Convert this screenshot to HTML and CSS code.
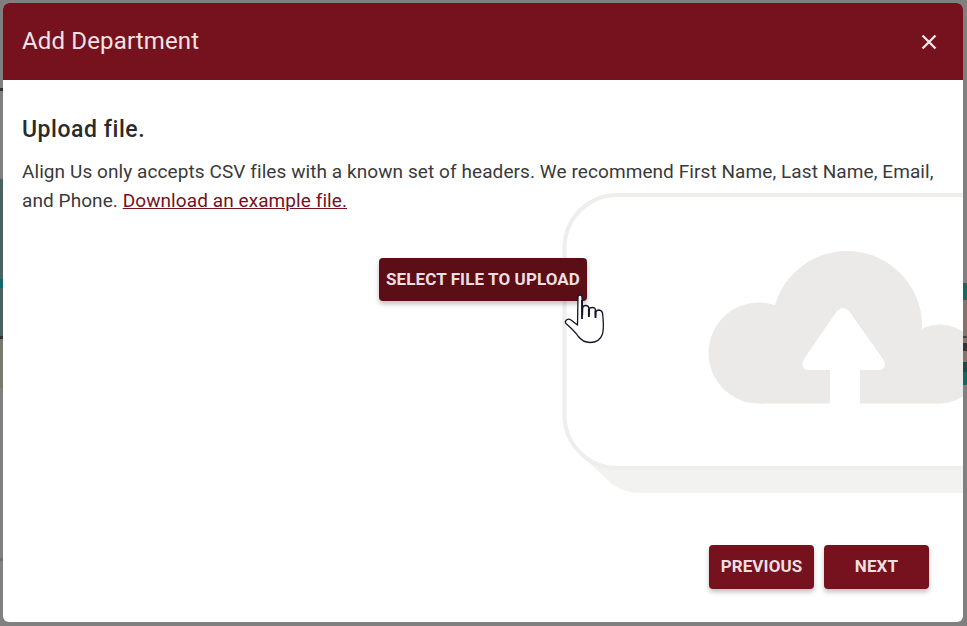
FILE: index.html
```html
<!DOCTYPE html>
<html lang="en">
<head>
    <meta charset="UTF-8">
    <meta name="viewport" content="width=device-width, initial-scale=1.0">
    <title>Add Department</title>
    <link rel="stylesheet" href="styles.css">
</head>
<body>
    <div class="modal">
        <div class="modal-header">
            <h2>Add Department</h2>
            <button class="close-btn" aria-label="Close">
                <svg width="16" height="16" viewBox="0 0 16 16"><path d="M1.500 1.500 L14.500 14.500 M14.500 1.500 L1.500 14.500" stroke="#f1e3e5" stroke-width="2.400" fill="none"/></svg>
            </button>
        </div>
        <div class="modal-body">
            <!-- faded upload picture behind the content -->
            <svg class="upload-art" width="404" height="300" viewBox="560 193 404 300">
                <path d="M583 457 L612 484 Q624 493 640 493 L964 493 L964 460 Z" fill="#f2f2f1"/>
                <rect x="564.500" y="195" width="460" height="273" rx="53" fill="#fff" stroke="#eeeeed" stroke-width="4"/>
                <circle cx="759" cy="353" r="50.500" fill="#ebeae9"/>
                <circle cx="847" cy="326" r="75" fill="#ebeae9"/>
                <circle cx="940" cy="364" r="39.500" fill="#ebeae9"/>
                <rect x="759" y="340" width="181" height="63.500" fill="#ebeae9"/>
                <path d="M830 404 V370 H808 Q803 370 802.500 365 Q802 362 804 359 L837 311 Q843 305 849 311 L883 359 Q885 362 885 365 Q884 370 879 370 H860 V404 Z" fill="#fff"/>
            </svg>
            <h3>Upload file.</h3>
            <p>Align Us only accepts CSV files with a known set of headers. We recommend First Name, Last Name, Email, and Phone. <a href="#">Download an example file.</a></p>
            <div class="upload-row">
                <button class="btn btn-dark">Select file to upload</button>
            </div>
            <div class="modal-actions">
                <button class="btn">Previous</button>
                <button class="btn">Next</button>
            </div>
        </div>
        <svg class="hand" width="46" height="50" viewBox="0 0 46 50">
            <path d="M14 3 Q14 1 16 1 Q18 1 18 3 L18.500 21 L18.700 14 Q19 11.500 21.500 11.500 Q24.500 11.500 24.800 14 L25 22 L25.300 15 Q25.500 13.500 28.500 13.500 Q31 13.500 31.300 15.500 L31.500 23 L31.800 18 Q32.500 16 35 16 Q38 16.500 38.500 19 C39.500 27 40 34 38.500 40 C36.500 46 31 48.500 26 48.500 C20.500 48.500 17 46 14 42 C10.500 37 6.500 33.500 2.500 30 Q0.500 28 2 26.500 Q4 24 7 26 L13.500 31 Z" fill="#fff" stroke="#14152a" stroke-width="1.300" stroke-linejoin="round"/>
            <path d="M18 6 V25 M24.800 15 V23 M31.500 17 V24" stroke="#14152a" stroke-width="1.800" fill="none"/>
        </svg>
    </div>
</body>
</html>
```

FILE: styles.css
```css
html, body {
    height: 100%;
}

body {
    margin: 0;
    padding: 3px 4px 4px 3px;
    box-sizing: border-box;
    font-family: Roboto, "Liberation Sans", sans-serif;
    overflow: hidden;
    background-color: #808080;
    background-repeat: no-repeat;
    background-position: left top, right top;
    background-size: 3px 100%, 4px 100%;
    /* page behind the overlay only shows in the two edge strips */
    background-image:
        linear-gradient(to bottom, #808080 0, #808080 88px, #333 88px, #333 91px, #808080 91px, #808080 179px, #4a6360 179px, #4a6360 279px, #0f6a6c 279px, #0f6a6c 288px, #4a6360 288px, #4a6360 336px, #333 336px, #333 339px, #7a7a6c 339px, #7a7a6c 388px, #808080 388px, #808080 558px, #6e6e6e 558px, #6e6e6e 561px, #808080 561px),
        linear-gradient(to bottom, #808080 0, #808080 283px, #186660 283px, #186660 300px, #85736a 300px, #85736a 336px, #444 336px, #444 338px, #85736a 338px, #85736a 343px, #333 343px, #333 351px, #85736a 351px, #85736a 362px, #1d4a48 362px, #1d4a48 372px, #186660 372px, #186660 385px, #808080 385px);
}

.modal {
    position: relative;
    height: 619px;
    background: #fff;
    border-radius: 6px;
    overflow: hidden;
    display: flex;
    flex-direction: column;
}

.modal-header {
    height: 77px;
    flex-shrink: 0;
    display: flex;
    align-items: center;
    justify-content: space-between;
    padding: 0 26px 2px 19px;
    box-sizing: border-box;
    background: #75121d;
}

.modal-header h2 {
    margin: 0;
    color: #f1e3e5;
    font-size: 24px;
    font-weight: 400;
    letter-spacing: 0.15px;
}

.close-btn {
    display: flex;
    padding: 2px 0 0;
    border: none;
    background: none;
}

.modal-body {
    position: relative;
    flex-grow: 1;
    display: flex;
    flex-direction: column;
    padding: 36px 20px 33px 19px;
}

.upload-art {
    position: absolute;
    left: 557px;
    top: 113px;
}

.modal-body h3 {
    position: relative;
    margin: 0;
    color: #2a2a2a;
    font-size: 23px;
    line-height: 28px;
    font-weight: 500;
    letter-spacing: 0.55px;
}

.modal-body p {
    position: relative;
    margin: 14px 0 0;
    color: #3a3a3a;
    font-size: 19px;
    line-height: 28.500px;
    letter-spacing: 0.08px;
}

.modal-body p a {
    color: #75121d;
}

.upload-row {
    position: relative;
    display: flex;
    padding: 43px 0 0 357px;
}

.modal-actions {
    position: relative;
    margin-top: auto;
    display: flex;
    justify-content: flex-end;
    gap: 10px;
    padding-right: 14px;
}

.btn {
    min-width: 105px;
    height: 44px;
    padding: 0 7px 2px;
    border: none;
    border-radius: 4px;
    background: #75121d;
    color: #ecdfe1;
    font-family: inherit;
    font-size: 17px;
    font-weight: 700;
    letter-spacing: 0.1px;
    text-transform: uppercase;
    box-shadow: 0 3px 5px rgba(0, 0, 0, 0.25);
}

.btn-dark {
    height: 43px;
    background: #5c0e16;
}

.hand {
    position: absolute;
    left: 561px;
    top: 291px;
}
```
